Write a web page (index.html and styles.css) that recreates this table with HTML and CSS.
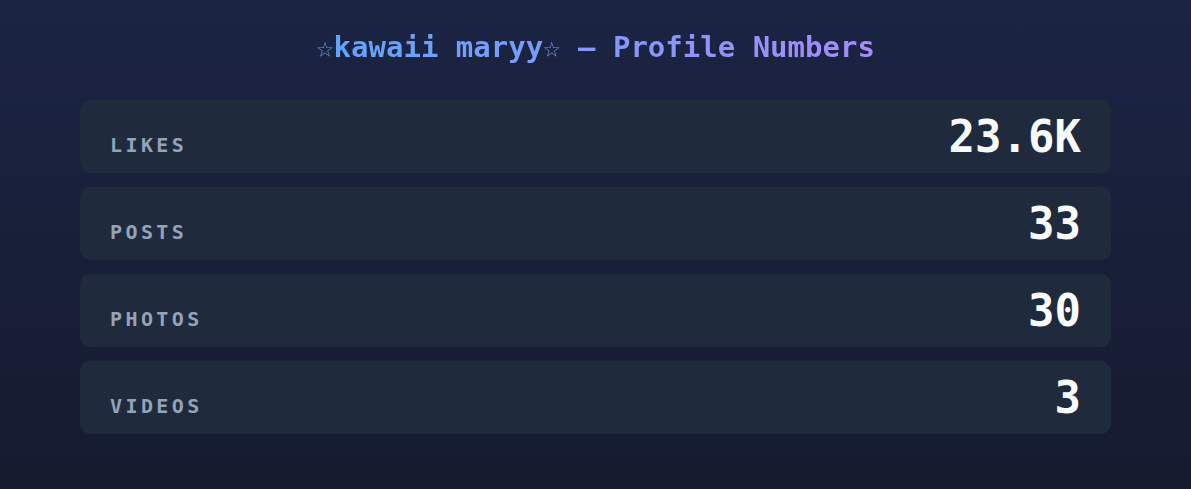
FILE: index.html
```html
<!DOCTYPE html>
<html lang="en">
<head>
    <meta charset="UTF-8">
    <meta name="viewport" content="width=device-width, initial-scale=1.0">
    <title>Profile Numbers</title>
    <link rel="stylesheet" href="styles.css">
</head>
<body>
    <div class="container">
        <h1 class="title">☆kawaii maryy☆ — Profile Numbers</h1>

        <div class="stats">
            <div class="stat">
                <span class="label">Likes</span>
                <span class="value">23.6K</span>
            </div>
            <div class="stat">
                <span class="label">Posts</span>
                <span class="value">33</span>
            </div>
            <div class="stat">
                <span class="label">Photos</span>
                <span class="value">30</span>
            </div>
            <div class="stat">
                <span class="label">Videos</span>
                <span class="value">3</span>
            </div>
        </div>
    </div>
</body>
</html>
```

FILE: styles.css
```css
* {
    margin: 0;
    padding: 0;
    box-sizing: border-box;
}

html, body {
    height: 100%;
}

body {
    font-family: 'DejaVu Sans Mono', 'Liberation Mono', monospace;
    background: linear-gradient(180deg, #1b2443 0%, #151b2f 100%);
    color: #f8fafc;
}

.container {
    padding: 30px 80px 40px;
}

.title {
    text-align: center;
    font-size: 29px;
    font-weight: bold;
    margin-bottom: 36px;
    background: linear-gradient(90deg, #60a5fa 0%, #a78bfa 100%);
    -webkit-background-clip: text;
    background-clip: text;
    color: transparent;
    width: fit-content;
    margin-left: auto;
    margin-right: auto;
}

.stats {
    display: flex;
    flex-direction: column;
    gap: 14px;
}

.stat {
    display: flex;
    justify-content: space-between;
    align-items: baseline;
    background: #1f2a3c;
    border-radius: 10px;
    padding: 11px 30px;
    height: 73px;
}

.label {
    font-size: 20px;
    font-weight: bold;
    text-transform: uppercase;
    letter-spacing: 3.4px;
    color: #94a3b8;
}

.value {
    font-size: 44px;
    font-weight: bold;
    color: #f8fafc;
}
```
